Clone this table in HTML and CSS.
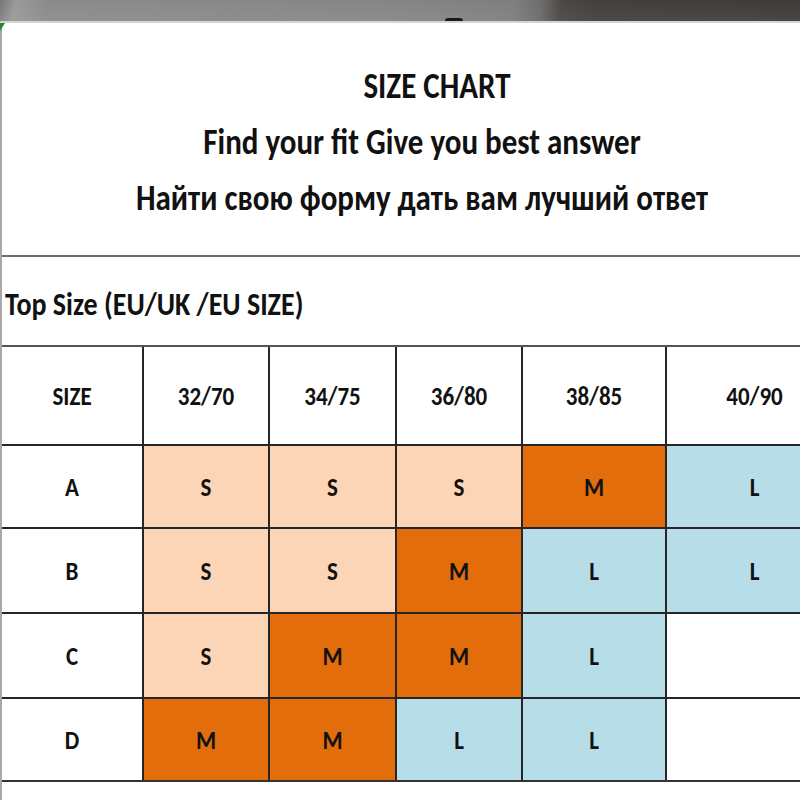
FILE: index.html
```html
<!DOCTYPE html>
<html lang="ru">
<head>
<meta charset="utf-8">
<title>Size chart</title>
<link rel="stylesheet" href="styles.css">
</head>
<body>
<div class="topbar"><span class="knob"></span></div>
<div class="sheet">
  <span class="marker"></span>
  <header class="titles">
    <p class="line first"><span>SIZE CHART</span></p>
    <p class="line"><span>Find your fit Give you best answer</span></p>
    <p class="line"><span>Найти свою форму дать вам лучший ответ</span></p>
  </header>
  <div class="label"><span>Top Size (EU/UK /EU SIZE)</span></div>
  <div class="chart">
    <div class="cell head"><span>SIZE</span></div>
    <div class="cell head"><span>32/70</span></div>
    <div class="cell head"><span>34/75</span></div>
    <div class="cell head"><span>36/80</span></div>
    <div class="cell head"><span>38/85</span></div>
    <div class="cell head"><span>40/90</span></div>

    <div class="cell"><span>A</span></div>
    <div class="cell p"><span>S</span></div>
    <div class="cell p"><span>S</span></div>
    <div class="cell p"><span>S</span></div>
    <div class="cell o"><span>M</span></div>
    <div class="cell b"><span>L</span></div>

    <div class="cell"><span>B</span></div>
    <div class="cell p"><span>S</span></div>
    <div class="cell p"><span>S</span></div>
    <div class="cell o"><span>M</span></div>
    <div class="cell b"><span>L</span></div>
    <div class="cell b"><span>L</span></div>

    <div class="cell"><span>C</span></div>
    <div class="cell p"><span>S</span></div>
    <div class="cell o"><span>M</span></div>
    <div class="cell o"><span>M</span></div>
    <div class="cell b"><span>L</span></div>
    <div class="cell"></div>

    <div class="cell"><span>D</span></div>
    <div class="cell o"><span>M</span></div>
    <div class="cell o"><span>M</span></div>
    <div class="cell b"><span>L</span></div>
    <div class="cell b"><span>L</span></div>
    <div class="cell"></div>
  </div>
</div>
</body>
</html>
```

FILE: styles.css
```css
html, body {
  margin: 0;
  padding: 0;
}
body {
  width: 800px;
  height: 800px;
  overflow: hidden;
  background: #ffffff;
  font-family: Carlito, Lato, "Open Sans", sans-serif;
  font-weight: 700;
  color: #111111;
}
.topbar {
  position: relative;
  height: 21px;
  border-bottom: 2px solid #d4d4d4;
  background:
    linear-gradient(180deg, rgba(255,255,255,0) 0%, rgba(255,255,255,0.06) 100%),
    linear-gradient(100deg, #777777 0%, #9a9a9a 2%, #8b8b8b 6%, #888888 30%, #858585 50%, #7e7e7e 64%, #6c6a68 67.5%, #4a4744 70%, #423f3c 74%, #3e3c3a 100%);
}
.knob {
  position: absolute;
  left: 445px;
  top: 18px;
  width: 18px;
  height: 3px;
  border-radius: 9px 9px 0 0;
  background: #1a1a1a;
}
.sheet {
  position: relative;
  width: 842px;
  height: 777px;
  border-left: 2px solid #a8a8a8;
  box-sizing: border-box;
}
.marker {
  position: absolute;
  left: -2px;
  top: 0;
  width: 0;
  height: 0;
  border-top: 8px solid #1f8a2a;
  border-right: 5px solid transparent;
}
.titles {
  height: 234px;
  box-sizing: border-box;
  border-bottom: 2px solid #6c6c6c;
  padding-top: 34px;
  display: flex;
  flex-direction: column;
  align-items: center;
}
.line {
  margin: 0;
  height: 56px;
  line-height: 56px;
  font-size: 31px;
  white-space: nowrap;
}
.line span, .label span, .cell span {
  display: inline-block;
  transform: scaleY(1.18);
}
.label span {
  transform: scaleY(1.12);
}
.first {
  padding-left: 30px;
}
.label {
  height: 88px;
  box-sizing: border-box;
  padding: 31px 0 0 3px;
  font-size: 28px;
  line-height: 34px;
  white-space: nowrap;
}
.chart {
  display: grid;
  grid-template-columns: 140px 124px 125px 124px 142px 175px;
  grid-template-rows: 97px 81px 83px 83px 81px;
  gap: 2px;
  background: #262626;
  border-top: 2px solid #555555;
  border-bottom: 2px solid #333333;
  font-size: 23px;
}
.cell {
  background: #ffffff;
  display: flex;
  align-items: center;
  justify-content: center;
}
.p { background: #fcd5b6; }
.o { background: #e36c0b; }
.b { background: #b7dde8; }
```
